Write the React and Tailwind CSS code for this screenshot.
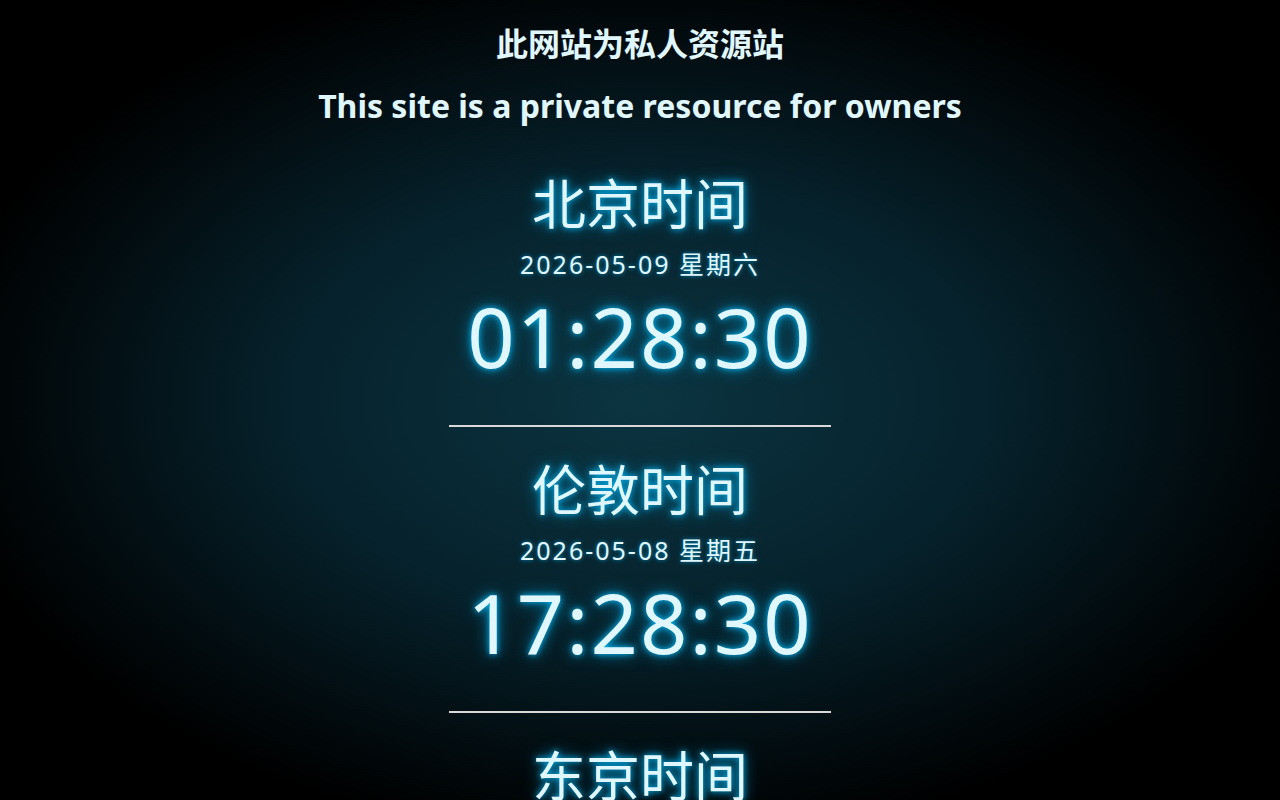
const clocks = [
  { name: "北京时间", date: "2026-05-09 星期六", time: "01:28:30" },
  { name: "伦敦时间", date: "2026-05-08 星期五", time: "17:28:30" },
  { name: "东京时间", date: "2026-05-09 星期六", time: "02:28:30" },
];

const glow = "[text-shadow:0_0_6px_#00bfff,0_0_16px_#0088b8]";

const ClockBlock = ({ clock, last }) => (
  <div className="flex flex-col items-center">
    <div className={`text-[54px] leading-[60px] text-[#e0f7ff] ${glow}`}>{clock.name}</div>
    <div className="mt-[16px] text-[25px] leading-[28px] tracking-[2px] text-[#e0f7ff] [text-shadow:0_0_4px_#0090c0]">
      {clock.date}
    </div>
    <div className={`mt-[8px] text-[83px] leading-[100px] tracking-[2px] text-[#e0f7ff] ${glow}`}>
      {clock.time}
    </div>
    {!last && <div className="mt-[39px] mb-[33px] h-[2px] w-[382px] bg-[#d8d8d8]" />}
  </div>
);

export default function App() {
  return (
    <div className="h-screen overflow-hidden bg-black bg-[radial-gradient(ellipse_at_center,#0b3441_0%,#06222c_38%,#000000_78%)] font-['Noto_Sans','Noto_Sans_CJK_SC',sans-serif]">
      <div className="flex flex-col items-center pt-[24px]">
        <h1 className="text-[32px] leading-[40px] font-bold text-[#e0f7ff]">此网站为私人资源站</h1>
        <p className="mt-[20px] text-[32px] leading-[44px] font-bold text-[#e0f7ff]">
          This site is a private resource for owners
        </p>
        <div className="mt-[46px] flex flex-col items-center">
          {clocks.map((c, i) => (
            <ClockBlock key={c.name} clock={c} last={i === clocks.length - 1} />
          ))}
        </div>
      </div>
    </div>
  );
}
